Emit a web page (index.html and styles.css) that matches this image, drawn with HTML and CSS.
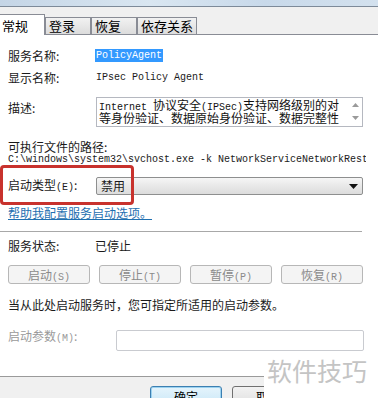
FILE: index.html
```html
<!DOCTYPE html>
<html lang="zh">
<head>
<meta charset="utf-8">
<link rel="stylesheet" href="styles.css">
</head>
<body>
<div class="chrome"></div>
<div class="tabs">
  <div class="tab sel">常规</div>
  <div class="tab t2">登录</div>
  <div class="tab t3">恢复</div>
  <div class="tab t4">依存关系</div>
</div>
<div class="page">
  <div class="row r1"><span class="lbl">服务名称:</span><span class="val mono"><span class="hl">PolicyAgent</span></span></div>
  <div class="row r2"><span class="lbl">显示名称:</span><span class="val mono">IPsec Policy Agent</span></div>
  <div class="row r3">
    <span class="lbl lbl-top">描述:</span>
    <div class="textarea">
      <div class="ta-text">
        <div class="ta-line"><span class="mono">Internet </span>协议安全<span class="mono">(IPSec)</span>支持网络级别的对</div>
        <div class="ta-line">等身份验证、数据原始身份验证、数据完整性</div>
      </div>
      <div class="scroll">
        <svg width="7" height="4" viewBox="0 0 7 4"><path d="M0 4 L3.5 0 L7 4Z" fill="#9a9a9a"/></svg>
        <svg width="7" height="4" viewBox="0 0 7 4"><path d="M0 0 L3.5 4 L7 0Z" fill="#9a9a9a"/></svg>
      </div>
    </div>
  </div>
  <div class="row r4">可执行文件的路径:</div>
  <div class="path mono">C:\windows\system32\svchost.exe -k NetworkServiceNetworkRestricted</div>
  <div class="row r6">
    <span class="lbl">启动类型<span class="mono">(E)</span>:</span>
    <div class="select"><span>禁用</span>
      <svg width="9" height="5" viewBox="0 0 9 5"><path d="M0 0 L9 0 L4.5 5Z" fill="#111"/></svg>
    </div>
  </div>
  <div class="row r7"><a class="link">帮助我配置服务启动选项。</a></div>
  <div class="sep"></div>
  <div class="row r8"><span class="lbl">服务状态:</span><span class="status">已停止</span></div>
  <div class="btns">
    <div class="btn">启动<span class="mono">(S)</span></div>
    <div class="btn">停止<span class="mono">(T)</span></div>
    <div class="btn">暂停<span class="mono">(P)</span></div>
    <div class="btn">恢复<span class="mono">(R)</span></div>
  </div>
  <div class="row r9">当从此处启动服务时，您可指定所适用的启动参数。</div>
  <div class="row r10"><span class="lbl2">启动参数<span class="mono">(M)</span>:</span><div class="input"></div></div>
</div>
<div class="footer">
  <div class="fbtn ok">确定</div>
  <div class="fbtn">取消</div>
  <div class="fbtn">应用<span class="mono">(A)</span></div>
</div>
<div class="red-box"></div>
<div class="mark-box"></div>
<div class="watermark">软件技巧</div>
</body>
</html>
```
FILE: styles.css
```css
html, body {
  margin: 0;
  padding: 0;
}
body {
  width: 378px;
  height: 398px;
  overflow: hidden;
  position: relative;
  background: #f0f0f0;
  font-family: "Noto Sans CJK SC", "Liberation Sans", sans-serif;
  font-size: 12px;
  color: #1a1a1a;
}
.mono {
  font-family: "Liberation Mono", "Noto Sans CJK SC", monospace;
  font-size: 10px;
}
.chrome {
  height: 6px;
  background: linear-gradient(to right, #c4d5e6, #d9e6f1 40%, #c8d9ea 70%, #d3e1ee);
  border-bottom: 1px solid #7d8a99;
}
.tabs {
  height: 27px;
  display: flex;
  align-items: flex-end;
  background: #f0f0f0;
  border-bottom: 1px solid #898c95;
}
.tab {
  box-sizing: border-box;
  height: 17px;
  border: 1px solid #898c95;
  border-bottom: none;
  background: linear-gradient(#f2f2f2, #dcdcdc);
  font-size: 13px;
  line-height: 16px;
  padding-left: 3px;
  color: #000;
}
.tab.sel {
  height: 21px;
  width: 45px;
  margin-bottom: -1px;
  background: #fff;
  padding-left: 2px;
  line-height: 21px;
  border-left: none;
  position: relative;
  z-index: 1;
}
.t2 { width: 46px; }
.t3 { width: 46px; }
.t4 { width: 60px; }
.page {
  height: 342px;
  background: #fff;
  border-bottom: 1px solid #9a9a9a;
  padding: 14px 0 0 8px;
  box-sizing: border-box;
  overflow: hidden;
}
.row {
  display: flex;
  align-items: center;
  line-height: 14px;
  white-space: nowrap;
}
.lbl {
  width: 88px;
  flex: none;
}
.lbl-top {
  align-self: flex-start;
  padding-top: 4px;
}
.val { line-height: 14px; }
.hl {
  background: #3399ff;
  color: #fff;
  padding: 0 1px 0 1px;
  margin-left: -1px;
  display: inline-block;
  line-height: 13px;
}
.r2 { margin-top: 8px; }
.r3 { margin-top: 12px; align-items: flex-start; }
.textarea {
  box-sizing: border-box;
  width: 267px;
  height: 30px;
  border: 1px solid #b5b8c0;
  display: flex;
  overflow: hidden;
}
.ta-text {
  flex: 1;
  padding: 0 0 0 2px;
  font-size: 12px;
  color: #111;
}
.ta-line {
  height: 13px;
  line-height: 13px;
}
.scroll {
  width: 13px;
  display: flex;
  flex-direction: column;
  align-items: center;
  justify-content: space-between;
  padding: 5px 0 6px;
}
.r4 { margin-top: 13px; }
.path {
  width: 358px;
  line-height: 12px;
  white-space: nowrap;
  overflow: hidden;
}
.r6 { margin-top: 11px; }
.select {
  box-sizing: border-box;
  width: 267px;
  height: 18px;
  border: 1px solid #8e8f8f;
  border-radius: 2px;
  background: linear-gradient(#f6f6f6, #e8e8e8 50%, #dcdcdc);
  display: flex;
  align-items: center;
  justify-content: space-between;
  padding: 0 4px 0 4px;
  font-size: 12px;
}
.r7 { margin-top: 11px; }
.link {
  color: #1f6fb0;
  text-decoration: underline;
}
.sep {
  margin-top: 11px;
  margin-left: -8px;
  width: 362px;
  height: 1px;
  background: #a8a8a8;
}
.r8 { margin-top: 7px; }
.status { margin-left: -1px; }
.btns {
  margin-top: 12px;
  width: 355px;
  display: grid;
  grid-template-columns: repeat(4, 1fr);
  column-gap: 9px;
}
.btn {
  box-sizing: border-box;
  height: 19px;
  border: 1px solid #b7b7b7;
  border-radius: 3px;
  background: #f4f4f4;
  color: #8a8a8a;
  text-align: center;
  line-height: 17px;
}
.r9 { margin-top: 14px; }
.r10 { margin-top: 18px; align-items: flex-start; }
.lbl2 {
  width: 108px;
  flex: none;
  color: #9a9a9a;
  line-height: 12px;
}
.input {
  box-sizing: border-box;
  width: 248px;
  height: 21px;
  border: 1px solid #c9cbd0;
  border-radius: 2px;
}
.footer {
  display: flex;
  gap: 10px;
  padding: 9px 0 0 150px;
  height: 20px;
  white-space: nowrap;
}
.fbtn {
  box-sizing: border-box;
  flex: none;
  width: 72px;
  height: 23px;
  border: 1px solid #707070;
  border-radius: 3px;
  background: linear-gradient(#f2f2f2, #dcdcdc);
  text-align: center;
  line-height: 20px;
  font-size: 12px;
  color: #000;
}
.fbtn.ok {
  border-color: #3c7fb1;
  background: linear-gradient(#e5f4fc, #c4e5f6);
  box-shadow: inset 0 0 0 1px #9bd2f0;
}
.red-box {
  position: absolute;
  left: 0;
  top: 165px;
  width: 134px;
  height: 40px;
  box-sizing: border-box;
  border: 3px solid #c8322d;
  border-radius: 4px;
}
.mark-box {
  position: absolute;
  left: 264px;
  top: 353px;
  width: 114px;
  height: 45px;
  background: #fff;
}
.watermark {
  position: absolute;
  left: 267px;
  top: 353px;
  font-size: 25px;
  line-height: 34px;
  color: #c4c4c4;
}
```
